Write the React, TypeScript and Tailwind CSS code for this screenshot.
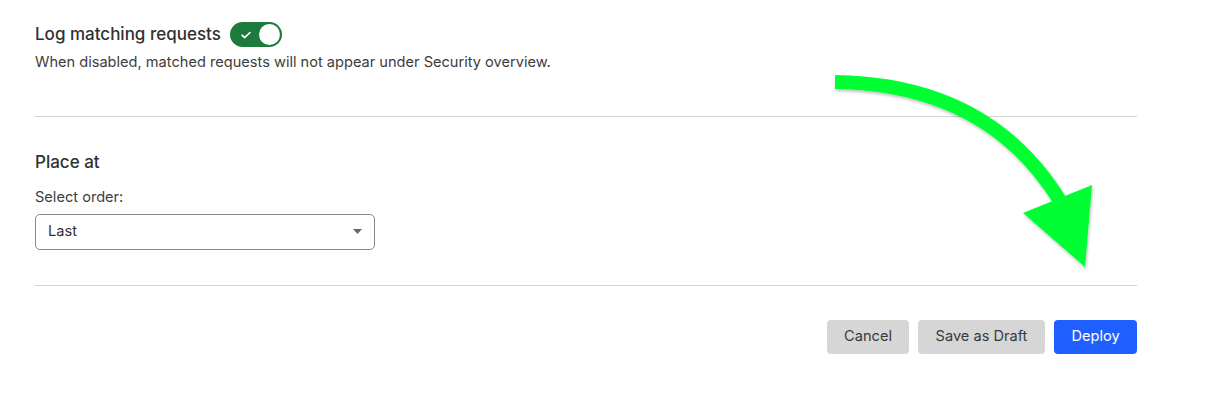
import React from 'react';

function Toggle() {
  return (
    <div className="flex h-[25px] w-[52px] items-center justify-between rounded-full bg-[#1d7a3c] pl-[10px] pr-[2px]">
      <svg width="12" height="12" viewBox="0 0 12 12" fill="none">
        <path d="M2 6.2l2.6 2.5L10 3.5" stroke="white" strokeWidth="1.6" strokeLinecap="round" strokeLinejoin="round" />
      </svg>
      <div className="h-[21px] w-[21px] rounded-full bg-white" />
    </div>
  );
}

function Arrow() {
  return (
    <svg className="pointer-events-none absolute left-0 top-0" width="1205" height="410" viewBox="0 0 1205 410">
      <defs>
        <filter id="sh" x="-10%" y="-10%" width="120%" height="120%">
          <feDropShadow dx="1" dy="2" stdDeviation="1.5" floodColor="#000" floodOpacity="0.25" />
        </filter>
      </defs>
      <g filter="url(#sh)" fill="#00ff33">
        <path d="M835 82 Q 990 84 1062 204" stroke="#00ff33" strokeWidth="14" fill="none" />
        <polygon points="1023,213 1092,185 1085,267" />
      </g>
    </svg>
  );
}

export default function App() {
  return (
    <div className="relative h-[410px] w-[1205px] bg-white font-['Inter',sans-serif] text-[#313131]">
      <div className="w-[1137px] pl-[35px] pt-[22px]">
        <div className="flex items-center gap-[9px]">
          <span className="text-[17px] font-medium">Log matching requests</span>
          <Toggle />
        </div>
        <p className="mt-[4px] text-[14.6px] text-[#3d3d3d]">
          When disabled, matched requests will not appear under Security overview.
        </p>
        <div className="mt-[43px] h-px bg-[#d4d4d4]" />
        <h3 className="mt-[33px] text-[17px] font-medium">Place at</h3>
        <div className="mt-[11px] text-[14.6px] text-[#3d3d3d]">Select order:</div>
        <div className="mt-[5px] flex h-[36px] w-[340px] items-center justify-between rounded-[5px] border border-[#8a8a8a] pl-[12px] pr-[12px] text-[14.6px]">
          <span>Last</span>
          <svg width="9" height="5" viewBox="0 0 9 5">
            <path d="M0 0h9L4.5 5z" fill="#666" />
          </svg>
        </div>
        <div className="mt-[35px] h-px bg-[#d4d4d4]" />
        <div className="mt-[34px] flex justify-end gap-[9px] text-[14.6px]">
          <button className="h-[34px] w-[82px] rounded-[4px] bg-[#d6d6d6] text-[#3a3a3a]">Cancel</button>
          <button className="h-[34px] w-[127px] rounded-[4px] bg-[#d6d6d6] text-[#3a3a3a]">Save as Draft</button>
          <button className="h-[34px] w-[83px] rounded-[4px] bg-[#1f5eff] text-white">Deploy</button>
        </div>
      </div>
      <Arrow />
    </div>
  );
}
